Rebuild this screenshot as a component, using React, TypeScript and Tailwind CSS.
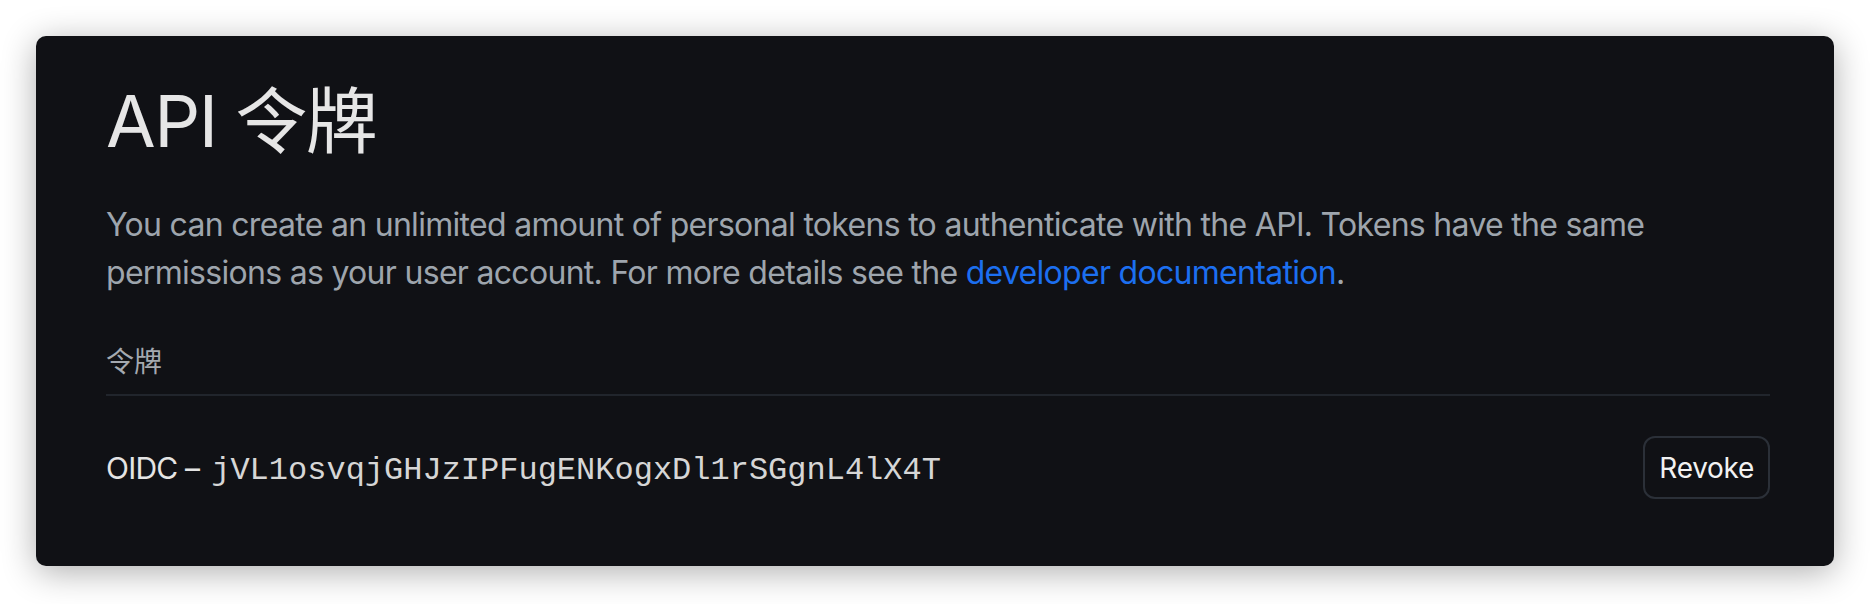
export default function App() {
  return (
    <div className="min-h-screen bg-white p-[36px] font-['Inter','Noto_Sans_CJK_SC',sans-serif]">
      {/* Card */}
      <div className="rounded-[10px] bg-[#101115] pl-[70px] pr-[64px] pt-[40px] pb-[67px] shadow-[0_6px_34px_rgba(0,0,0,0.32)]">
        <h1 className="text-[72px] leading-[90px] font-normal tracking-[-1.5px] text-[#e6e6e6]">
          API 令牌
        </h1>

        <p className="mt-[35px] text-[32px] leading-[48px] tracking-[-0.7px] text-[#9ea5ad]">
          You can create an unlimited amount of personal tokens to authenticate with the API. Tokens have the same
          permissions as your user account. For more details see the{" "}
          <a href="#" className="text-[#1c6ff0]">
            developer documentation
          </a>
          .
        </p>

        {/* Tokens list */}
        <div className="mt-[45px]">
          <div className="border-b-2 border-[#21252c] pb-[12px] text-[28px] leading-[40px] text-[#a4a9b0]">
            令牌
          </div>

          <div className="flex items-center justify-between pt-[40px]">
            <div className="mt-[6px] flex items-baseline text-[#e4e4e4]">
              <span className="mr-[12px] text-[30px] tracking-[-0.8px]">OIDC –</span>
              <span className="font-['Liberation_Mono',monospace] text-[32px] text-[#d6d6d6]">
                jVL1osvqjGHJzIPFugENKogxDl1rSGgnL4lX4T
              </span>
            </div>
            <button className="h-[63px] rounded-[12px] border-2 border-[#2b3038] bg-[#101115] px-[14px] text-[28px] tracking-[-0.3px] text-[#f2f2f2]">
              Revoke
            </button>
          </div>
        </div>
      </div>
    </div>
  )
}
